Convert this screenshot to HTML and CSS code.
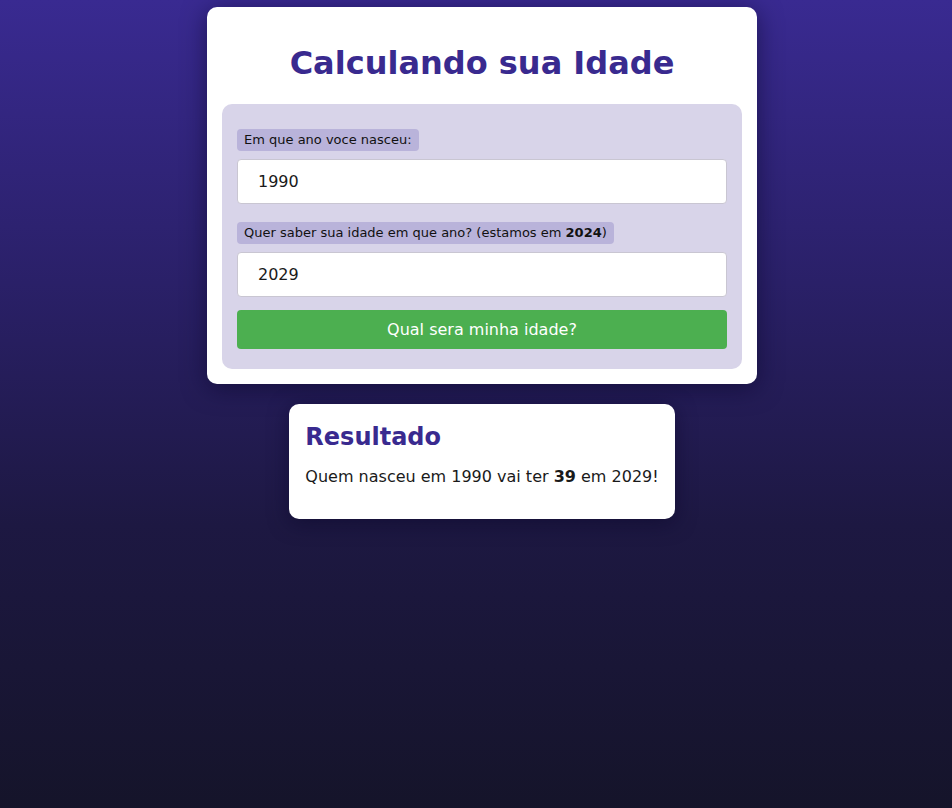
FILE: index.html
```html
<!DOCTYPE html>
<html lang="pt">
<head>
<meta charset="utf-8">
<title>Calculando sua Idade</title>
<link rel="stylesheet" href="styles.css">
</head>
<body>
<main class="page">
  <section class="card">
    <h1 class="title">Calculando sua Idade</h1>
    <form class="panel">
      <label class="badge" for="nasc">Em que ano voce nasceu:</label>
      <input class="field" id="nasc" type="text" value="1990">
      <label class="badge second" for="alvo">Quer saber sua idade em que ano? (estamos em <strong>2024</strong>)</label>
      <input class="field" id="alvo" type="text" value="2029">
      <button class="btn" type="button">Qual sera minha idade?</button>
    </form>
  </section>
  <section class="result">
    <h2 class="result-title">Resultado</h2>
    <p class="result-text">Quem nasceu em 1990 vai ter <strong>39</strong> em 2029!</p>
  </section>
</main>
</body>
</html>
```
FILE: styles.css
```css
html, body {
  margin: 0;
  padding: 0;
  height: 100%;
}
body {
  background: linear-gradient(to bottom, #392a91 0%, #2a2068 35%, #1d1842 65%, #15142a 100%);
  font-family: "DejaVu Sans", Verdana, sans-serif;
  color: #1a1a1a;
  min-height: 808px;
}
.page {
  display: flex;
  flex-direction: column;
  align-items: center;
  padding: 7px 0 0 12px;
  gap: 20px;
}
.card {
  width: 550px;
  box-sizing: border-box;
  background: #fff;
  border-radius: 10px;
  padding: 15px;
  box-shadow: 0 4px 24px rgba(10, 5, 40, 0.55);
}
.title {
  margin: 21px 0 20px;
  text-align: center;
  font-size: 32px;
  line-height: 41px;
  font-weight: bold;
  color: #392a8f;
}
.panel {
  background: #d8d4e9;
  border-radius: 10px;
  padding: 25px 15px 20px;
  display: flex;
  flex-direction: column;
  align-items: flex-start;
}
.badge {
  display: inline-block;
  background: #b9b3da;
  border-radius: 4px;
  font-size: 13px;
  line-height: 16px;
  padding: 3px 7px;
  color: #111;
  margin-bottom: 8px;
}
.badge.second {
  margin-top: 18px;
}
.field {
  width: 100%;
  box-sizing: border-box;
  height: 45px;
  border: 1px solid #c9c6d2;
  border-radius: 4px;
  background: #fff;
  padding: 0 20px;
  font-family: "DejaVu Sans", Verdana, sans-serif;
  font-size: 16px;
  color: #1a1a1a;
}
.btn {
  margin-top: 13px;
  width: 100%;
  height: 39px;
  border: none;
  border-radius: 4px;
  background: #4caf50;
  color: #fff;
  font-family: "DejaVu Sans", Verdana, sans-serif;
  font-size: 16px;
}
.result {
  background: #fff;
  border-radius: 10px;
  padding: 16px 16px 15px;
  box-shadow: 0 4px 20px rgba(10, 5, 40, 0.5);
}
.result-title {
  margin: 2px 0 13px;
  font-size: 24px;
  line-height: 30px;
  font-weight: bold;
  color: #392a8f;
}
.result-text {
  margin: 0 0 15px;
  font-size: 16px;
  line-height: 24px;
}
```
